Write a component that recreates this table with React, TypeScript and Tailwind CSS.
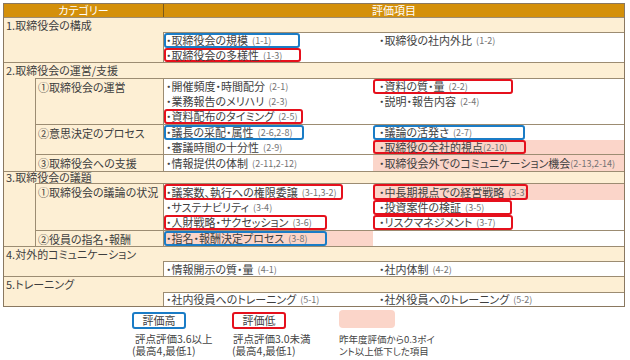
import React from 'react';

type Item = {
  t: string;
  c: string;
  box?: 'blue' | 'red';
  w?: string;
  pink?: boolean;
  tight?: boolean;
  clip?: boolean;
};

type Row = { h: string; l?: Item; r?: Item };

type Sub = { label: string; h: string; rows: Row[] };

type Section = {
  title: string;
  titleH: string;
  bodyH?: string;
  rows?: Row[];
  subs?: Sub[];
};

const sections: Section[] = [
  {
    title: '1.取締役会の構成',
    titleH: 'h-[14px]',
    bodyH: 'h-[30px]',
    rows: [
      {
        h: 'h-[15px]',
        l: { t: '取締役会の規模', c: '1-1', box: 'blue', w: 'w-[136px]' },
        r: { t: '取締役の社内外比', c: '1-2' }
      },
      { h: 'h-[14px]', l: { t: '取締役会の多様性', c: '1-3', box: 'red', w: 'w-[137px]' } }
    ]
  },
  {
    title: '2.取締役会の運営/支援',
    titleH: 'h-[15px]',
    subs: [
      {
        label: '①取締役会の運営',
        h: 'h-[46px]',
        rows: [
          {
            h: 'h-[15px]',
            l: { t: '開催頻度・時間配分', c: '2-1' },
            r: { t: '資料の質・量', c: '2-2', box: 'red', w: 'w-[140px]' }
          },
          {
            h: 'h-[15px]',
            l: { t: '業務報告のメリハリ', c: '2-3' },
            r: { t: '説明・報告内容', c: '2-4' }
          },
          { h: 'h-[15px]', l: { t: '資料配布のタイミング', c: '2-5', box: 'red', w: 'w-[139px]' } }
        ]
      },
      {
        label: '②意思決定のプロセス',
        h: 'h-[30px]',
        rows: [
          {
            h: 'h-[15px]',
            l: { t: '議長の采配・属性', c: '2-6,2-8', box: 'blue', w: 'w-[140px]' },
            r: { t: '議論の活発さ', c: '2-7', box: 'blue', w: 'w-[152px]' }
          },
          {
            h: 'h-[14px]',
            l: { t: '審議時間の十分性', c: '2-9' },
            r: { t: '取締役の全社的視点', c: '2-10', box: 'red', w: 'w-[153px]', pink: true, tight: true }
          }
        ]
      },
      {
        label: '③取締役会への支援',
        h: 'h-[17px]',
        rows: [
          {
            h: 'h-[16px]',
            l: { t: '情報提供の体制', c: '2-11,2-12' },
            r: { t: '取締役会外でのコミュニケーション機会', c: '2-13,2-14', pink: true, tight: true }
          }
        ]
      }
    ]
  },
  {
    title: '3.取締役会の議題',
    titleH: 'h-[11px]',
    subs: [
      {
        label: '①取締役会の議論の状況',
        h: 'h-[47px]',
        rows: [
          {
            h: 'h-[16px]',
            l: { t: '議案数、執行への権限委譲', c: '3-1,3-2', box: 'red', w: 'w-[179px]' },
            r: { t: '中長期視点での経営戦略', c: '3-3', box: 'red', w: 'w-[155px]', pink: true, clip: true }
          },
          {
            h: 'h-[15px]',
            l: { t: 'サステナビリティ', c: '3-4' },
            r: { t: '投資案件の検証', c: '3-5', box: 'red', w: 'w-[139px]' }
          },
          {
            h: 'h-[15px]',
            l: { t: '人財戦略・サクセッション', c: '3-6', box: 'red', w: 'w-[163px]' },
            r: { t: 'リスクマネジメント', c: '3-7', box: 'red', w: 'w-[140px]' }
          }
        ]
      },
      {
        label: '②役員の指名・報酬',
        h: 'h-[16px]',
        rows: [
          {
            h: 'h-[15px]',
            l: { t: '指名・報酬決定プロセス', c: '3-8', box: 'blue', w: 'w-[163px]', pink: true }
          }
        ]
      }
    ]
  },
  {
    title: '4.対外的コミュニケーション',
    titleH: 'h-[14px]',
    bodyH: 'h-[15px]',
    rows: [
      {
        h: 'h-[14px]',
        l: { t: '情報開示の質・量', c: '4-1' },
        r: { t: '社内体制', c: '4-2' }
      }
    ]
  },
  {
    title: '5.トレーニング',
    titleH: 'h-[15px]',
    bodyH: 'h-[14px]',
    rows: [
      {
        h: 'h-[13px]',
        l: { t: '社内役員へのトレーニング', c: '5-1' },
        r: { t: '社外役員へのトレーニング', c: '5-2' }
      }
    ]
  }
];

function Entry({ it, side }: { it: Item; side: 'l' | 'r' }) {
  const border =
    it.box === 'blue'
      ? 'border-[#1a7cc6]'
      : it.box === 'red'
      ? 'border-[#e5101c]'
      : 'border-transparent';
  return (
    <div
      className={`h-full flex items-center whitespace-nowrap rounded-[3px] border-2 ${border} ${it.w ?? ''} ${
        it.clip ? 'overflow-x-clip' : ''
      } ${side === 'r' ? 'pl-[4px]' : ''}`}
    >
      <span className="text-[11px] leading-none text-[#3e3e3e]">・{it.t}</span>
      <span className={`text-[9px] leading-none text-[#737373] ${it.tight ? '' : 'ml-[4px]'}`}>
        ({it.c})
      </span>
    </div>
  );
}

function Cell({ it, side }: { it?: Item; side: 'l' | 'r' }) {
  return (
    <div className={`${side === 'l' ? 'w-[209px]' : 'flex-1'} h-full ${it?.pink ? 'bg-[#fbd5c9]' : ''}`}>
      {it && <Entry it={it} side={side} />}
    </div>
  );
}

function Rows({ rows }: { rows: Row[] }) {
  return (
    <div className="flex-1 h-full flex flex-col border-l border-[#9c8c72] bg-white">
      {rows.map((row, i) => (
        <div key={i} className={`flex ${row.h}`}>
          <Cell it={row.l} side="l" />
          <Cell it={row.r} side="r" />
        </div>
      ))}
    </div>
  );
}

function LegendBox({ label, color }: { label: string; color: string }) {
  return (
    <div
      className={`w-[54px] h-[17px] rounded-[3px] border-2 ${color} flex items-center justify-center text-[11px] leading-none text-[#3e3e3e]`}
    >
      {label}
    </div>
  );
}

export default function App() {
  return (
    <div className="w-[630px] h-[360px] bg-white pt-[3px] pl-[3px] font-['Noto_Sans_CJK_JP',sans-serif] [font-feature-settings:'palt'] text-[#3e3e3e]">
      <div className="w-[622px] border border-[#8a7860] bg-[#fdefd4]">
        {/* header */}
        <div className="flex h-[13px] bg-[#d4900a] text-white text-[11px] leading-[13px]">
          <div className="w-[159px] text-center">カテゴリー</div>
          <div className="flex-1 border-l border-[#7a5818] text-center">評価項目</div>
        </div>

        {sections.map((s) => (
          <div key={s.title} className="border-t border-[#9c8c72]">
            <div className={`${s.titleH} flex items-center pl-[2px] text-[11px] leading-none`}>{s.title}</div>
            {s.rows && (
              <div className={`flex ${s.bodyH}`}>
                <div className="w-[159px]" />
                <div className="flex-1 flex border-t border-[#9c8c72]">
                  <Rows rows={s.rows} />
                </div>
              </div>
            )}
            {s.subs && (
              <div className="flex">
                <div className="w-[31px]" />
                <div className="flex-1 flex flex-col">
                  {s.subs.map((sub) => (
                    <div key={sub.label} className={`flex ${sub.h} border-t border-l border-[#9c8c72]`}>
                      <div className="w-[127px] pl-[2px] pt-[2px] text-[11px] leading-[13px]">{sub.label}</div>
                      <Rows rows={sub.rows} />
                    </div>
                  ))}
                </div>
              </div>
            )}
          </div>
        ))}
      </div>

      {/* legend */}
      <div className="flex mt-[5px] pl-[129px]">
        <div className="w-[100px]">
          <LegendBox label="評価高" color="border-[#1a7cc6]" />
          <div className="mt-[4px] text-[10.5px] leading-[12px] text-[#444]">
            <div className="pl-[3px]">評点評価3.6以上</div>
            <div>(最高4,最低1)</div>
          </div>
        </div>
        <div className="w-[107px]">
          <LegendBox label="評価低" color="border-[#e5101c]" />
          <div className="mt-[4px] text-[10.5px] leading-[12px] text-[#444]">
            <div className="pl-[1px]">評点評価3.0未満</div>
            <div>(最高4,最低1)</div>
          </div>
        </div>
        <div>
          <div className="-mt-[2px] w-[56px] h-[18px] rounded-[4px] bg-[#fbd5c9]" />
          <div className="mt-[5px] text-[9.5px] leading-[12px] text-[#444]">
            <div>昨年度評価から0.3ポイ</div>
            <div>ント以上低下した項目</div>
          </div>
        </div>
      </div>
    </div>
  );
}
